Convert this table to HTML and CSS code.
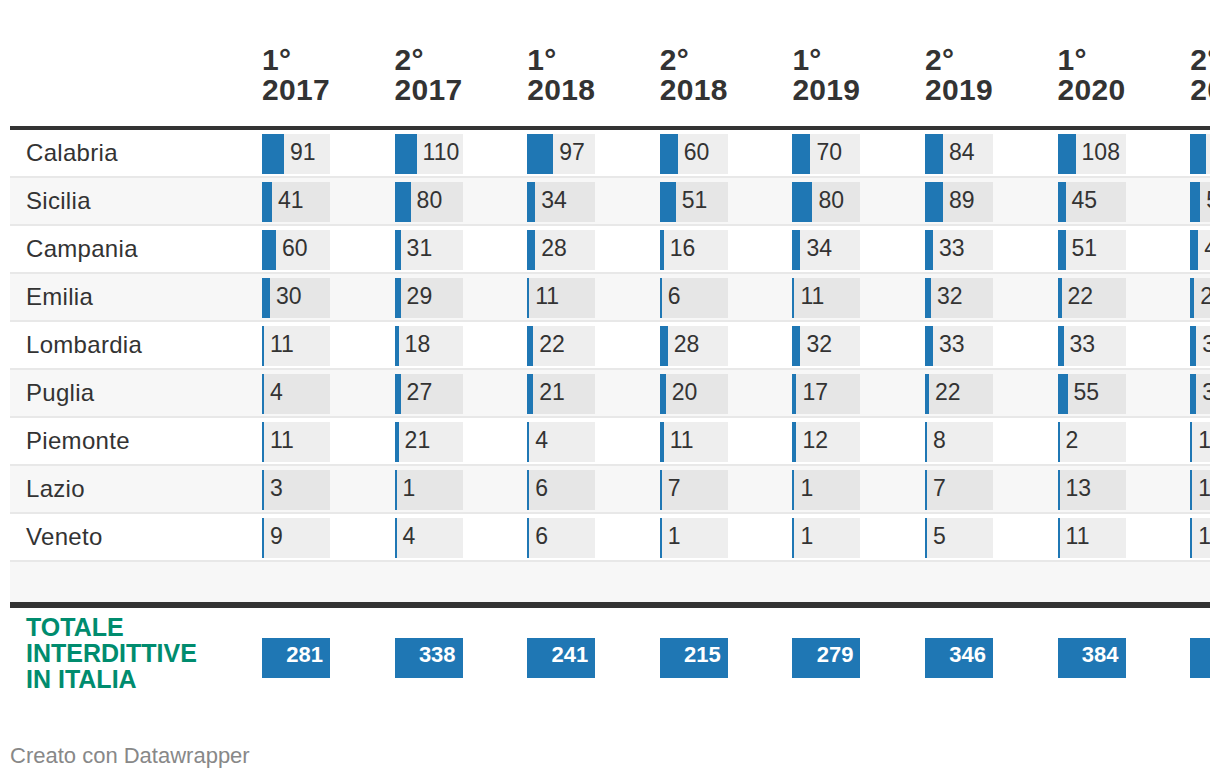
FILE: index.html
```html
<!DOCTYPE html>
<html lang="it">
<head>
<meta charset="utf-8">
<title>Interdittive</title>
<link rel="stylesheet" href="styles.css">
</head>
<body>
<div class="chart">
  <div class="table">
    <div class="row thead">
      <div class="th"></div>
      <div class="th">1°<br>2017</div>
      <div class="th">2°<br>2017</div>
      <div class="th">1°<br>2018</div>
      <div class="th">2°<br>2018</div>
      <div class="th">1°<br>2019</div>
      <div class="th">2°<br>2019</div>
      <div class="th">1°<br>2020</div>
      <div class="th">2°<br>2020</div>
    </div>

    <div class="row tr">
      <div class="lbl">Calabria</div>
      <div class="cell"><span class="bar" style="width:22px"></span><span class="num">91</span></div>
      <div class="cell"><span class="bar" style="width:22px"></span><span class="num">110</span></div>
      <div class="cell"><span class="bar" style="width:26px"></span><span class="num">97</span></div>
      <div class="cell"><span class="bar" style="width:18px"></span><span class="num">60</span></div>
      <div class="cell"><span class="bar" style="width:18px"></span><span class="num">70</span></div>
      <div class="cell"><span class="bar" style="width:18px"></span><span class="num">84</span></div>
      <div class="cell"><span class="bar" style="width:18px"></span><span class="num">108</span></div>
      <div class="cell"><span class="bar" style="width:16px"></span><span class="num">78</span></div>
    </div>
    <div class="row tr alt">
      <div class="lbl">Sicilia</div>
      <div class="cell"><span class="bar" style="width:10px"></span><span class="num">41</span></div>
      <div class="cell"><span class="bar" style="width:16px"></span><span class="num">80</span></div>
      <div class="cell"><span class="bar" style="width:8px"></span><span class="num">34</span></div>
      <div class="cell"><span class="bar" style="width:16px"></span><span class="num">51</span></div>
      <div class="cell"><span class="bar" style="width:20px"></span><span class="num">80</span></div>
      <div class="cell"><span class="bar" style="width:18px"></span><span class="num">89</span></div>
      <div class="cell"><span class="bar" style="width:8px"></span><span class="num">45</span></div>
      <div class="cell"><span class="bar" style="width:10px"></span><span class="num">52</span></div>
    </div>
    <div class="row tr">
      <div class="lbl">Campania</div>
      <div class="cell"><span class="bar" style="width:14px"></span><span class="num">60</span></div>
      <div class="cell"><span class="bar" style="width:6px"></span><span class="num">31</span></div>
      <div class="cell"><span class="bar" style="width:8px"></span><span class="num">28</span></div>
      <div class="cell"><span class="bar" style="width:4px"></span><span class="num">16</span></div>
      <div class="cell"><span class="bar" style="width:8px"></span><span class="num">34</span></div>
      <div class="cell"><span class="bar" style="width:8px"></span><span class="num">33</span></div>
      <div class="cell"><span class="bar" style="width:8px"></span><span class="num">51</span></div>
      <div class="cell"><span class="bar" style="width:8px"></span><span class="num">41</span></div>
    </div>
    <div class="row tr alt">
      <div class="lbl">Emilia</div>
      <div class="cell"><span class="bar" style="width:8px"></span><span class="num">30</span></div>
      <div class="cell"><span class="bar" style="width:6px"></span><span class="num">29</span></div>
      <div class="cell"><span class="bar" style="width:2px"></span><span class="num">11</span></div>
      <div class="cell"><span class="bar" style="width:2px"></span><span class="num">6</span></div>
      <div class="cell"><span class="bar" style="width:2px"></span><span class="num">11</span></div>
      <div class="cell"><span class="bar" style="width:6px"></span><span class="num">32</span></div>
      <div class="cell"><span class="bar" style="width:4px"></span><span class="num">22</span></div>
      <div class="cell"><span class="bar" style="width:4px"></span><span class="num">24</span></div>
    </div>
    <div class="row tr">
      <div class="lbl">Lombardia</div>
      <div class="cell"><span class="bar" style="width:2px"></span><span class="num">11</span></div>
      <div class="cell"><span class="bar" style="width:4px"></span><span class="num">18</span></div>
      <div class="cell"><span class="bar" style="width:6px"></span><span class="num">22</span></div>
      <div class="cell"><span class="bar" style="width:8px"></span><span class="num">28</span></div>
      <div class="cell"><span class="bar" style="width:8px"></span><span class="num">32</span></div>
      <div class="cell"><span class="bar" style="width:8px"></span><span class="num">33</span></div>
      <div class="cell"><span class="bar" style="width:6px"></span><span class="num">33</span></div>
      <div class="cell"><span class="bar" style="width:6px"></span><span class="num">31</span></div>
    </div>
    <div class="row tr alt">
      <div class="lbl">Puglia</div>
      <div class="cell"><span class="bar" style="width:2px"></span><span class="num">4</span></div>
      <div class="cell"><span class="bar" style="width:6px"></span><span class="num">27</span></div>
      <div class="cell"><span class="bar" style="width:6px"></span><span class="num">21</span></div>
      <div class="cell"><span class="bar" style="width:6px"></span><span class="num">20</span></div>
      <div class="cell"><span class="bar" style="width:4px"></span><span class="num">17</span></div>
      <div class="cell"><span class="bar" style="width:4px"></span><span class="num">22</span></div>
      <div class="cell"><span class="bar" style="width:10px"></span><span class="num">55</span></div>
      <div class="cell"><span class="bar" style="width:6px"></span><span class="num">33</span></div>
    </div>
    <div class="row tr">
      <div class="lbl">Piemonte</div>
      <div class="cell"><span class="bar" style="width:2px"></span><span class="num">11</span></div>
      <div class="cell"><span class="bar" style="width:4px"></span><span class="num">21</span></div>
      <div class="cell"><span class="bar" style="width:2px"></span><span class="num">4</span></div>
      <div class="cell"><span class="bar" style="width:4px"></span><span class="num">11</span></div>
      <div class="cell"><span class="bar" style="width:4px"></span><span class="num">12</span></div>
      <div class="cell"><span class="bar" style="width:2px"></span><span class="num">8</span></div>
      <div class="cell"><span class="bar" style="width:2px"></span><span class="num">2</span></div>
      <div class="cell"><span class="bar" style="width:2px"></span><span class="num">12</span></div>
    </div>
    <div class="row tr alt">
      <div class="lbl">Lazio</div>
      <div class="cell"><span class="bar" style="width:2px"></span><span class="num">3</span></div>
      <div class="cell"><span class="bar" style="width:2px"></span><span class="num">1</span></div>
      <div class="cell"><span class="bar" style="width:2px"></span><span class="num">6</span></div>
      <div class="cell"><span class="bar" style="width:2px"></span><span class="num">7</span></div>
      <div class="cell"><span class="bar" style="width:2px"></span><span class="num">1</span></div>
      <div class="cell"><span class="bar" style="width:2px"></span><span class="num">7</span></div>
      <div class="cell"><span class="bar" style="width:2px"></span><span class="num">13</span></div>
      <div class="cell"><span class="bar" style="width:2px"></span><span class="num">10</span></div>
    </div>
    <div class="row tr">
      <div class="lbl">Veneto</div>
      <div class="cell"><span class="bar" style="width:2px"></span><span class="num">9</span></div>
      <div class="cell"><span class="bar" style="width:2px"></span><span class="num">4</span></div>
      <div class="cell"><span class="bar" style="width:2px"></span><span class="num">6</span></div>
      <div class="cell"><span class="bar" style="width:2px"></span><span class="num">1</span></div>
      <div class="cell"><span class="bar" style="width:2px"></span><span class="num">1</span></div>
      <div class="cell"><span class="bar" style="width:2px"></span><span class="num">5</span></div>
      <div class="cell"><span class="bar" style="width:2px"></span><span class="num">11</span></div>
      <div class="cell"><span class="bar" style="width:2px"></span><span class="num">14</span></div>
    </div>
    <div class="row blank"></div>

    <div class="row tot">
      <div class="tlbl">TOTALE<br>INTERDITTIVE<br>IN ITALIA</div>
      <div class="tbox"><span>281</span></div>
      <div class="tbox"><span>338</span></div>
      <div class="tbox"><span>241</span></div>
      <div class="tbox"><span>215</span></div>
      <div class="tbox"><span>279</span></div>
      <div class="tbox"><span>346</span></div>
      <div class="tbox"><span>384</span></div>
      <div class="tbox"><span>358</span></div>
    </div>
  </div>
</div>
<div class="foot">Creato con Datawrapper</div>
</body>
</html>
```

FILE: styles.css
```css
html, body {
  margin: 0;
  padding: 0;
  background: #ffffff;
}

body {
  font-family: "Liberation Sans", Arial, Helvetica, sans-serif;
  color: #333333;
}

.chart {
  width: 1200px;
  margin-left: 10px;
  overflow: hidden;
}

.table {
  width: 1313px;
}

.row {
  display: grid;
  grid-template-columns: 252px repeat(8, 132.6px);
}

.thead {
  padding: 45px 0 21px;
  border-bottom: 4px solid #333333;
}

.th {
  font-size: 30px;
  line-height: 30px;
  font-weight: bold;
  letter-spacing: 0.3px;
  color: #333333;
}

.tr {
  height: 48px;
  box-sizing: border-box;
  padding: 4px 0 2px;
  border-bottom: 2px solid #e8e8e8;
  align-items: center;
}

.tr.alt {
  background: #f7f7f7;
}

.lbl {
  padding-left: 16px;
  padding-bottom: 2px;
  font-size: 24px;
  letter-spacing: 0.3px;
}

.cell {
  width: 68px;
  height: 40px;
  background: #eeeeee;
  display: flex;
  align-items: center;
  overflow: hidden;
}

.alt .cell {
  background: #e6e6e6;
}

.bar {
  flex: none;
  align-self: stretch;
  background: #1f77b4;
}

.num {
  margin-left: 6px;
  padding-bottom: 4px;
  font-size: 23px;
  white-space: nowrap;
}

.blank {
  height: 40px;
  background: #f7f7f7;
  border-bottom: 6px solid #333333;
}

.tot {
  padding-top: 6px;
  align-items: start;
}

.tlbl {
  padding-left: 16px;
  font-size: 25px;
  line-height: 26px;
  font-weight: bold;
  color: #008c6e;
}

.tbox {
  margin-top: 24px;
  width: 68px;
  height: 40px;
  box-sizing: border-box;
  padding-right: 7px;
  background: #1f77b4;
  color: #ffffff;
  font-size: 22px;
  font-weight: bold;
  display: flex;
  align-items: center;
  justify-content: flex-end;
}

.tbox span {
  padding-bottom: 7px;
}

.foot {
  margin: 51px 0 0 10px;
  font-size: 22px;
  color: #888888;
}
```
